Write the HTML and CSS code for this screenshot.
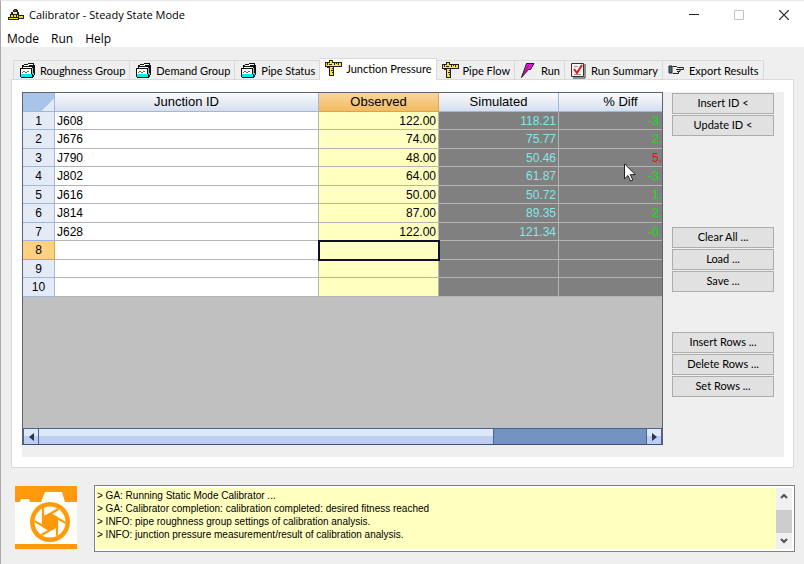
FILE: index.html
```
<!DOCTYPE html>
<html lang="en">
<head>
    <meta charset="UTF-8">
    <meta name="viewport" content="width=device-width, initial-scale=1.0">
    <title>Calibrator - Steady State Mode</title>
    <link rel="stylesheet" href="styles.css">
</head>
<body>
    <!-- shared icons -->
    <svg class="sprite" aria-hidden="true">
        <symbol id="folder" viewBox="0 0 17 17">
            <path d="M1 15V6h2V3h2V2h4V1h6v2h1v10h-1v2h-1v1H2v-1z" fill="#111"/>
            <path d="M5 3h4V2h5v1h-4v1H5zM4 5h9v1H4zM2 7h10v5H2z" fill="#fff"/>
            <path d="M13 6h1v6h-1z" fill="#bbb"/>
            <path d="M4 9h2v1H4zM8 9h2v1H8zM3 10h1v1H3zM6 10h2v1H6z" fill="#666"/>
            <path d="M2 12h11v3H2zM14 11h1v2h-1z" fill="#0ee"/>
        </symbol>
        <symbol id="caliper" viewBox="0 0 17 17">
            <path d="M0 2h4V0h4v2h9v5H9v9H4V8H2V7H0z" fill="#222"/>
            <path d="M1 3h15v3H1zM5 7h3v8H5zM5 1h2v2H5z" fill="#f4ec20"/>
            <path d="M2 3h1v2H2zM4 4h3v1H4zM9 3h1v2H9zM11 3h1v1h-1zM13 3h1v2h-1zM7 8h1v1H7zM6 10h2v1H6zM7 12h1v1H7z" fill="#222"/>
        </symbol>
    </svg>

    <header class="title-bar">
        <svg class="app-icon" viewBox="0 0 16 12" shape-rendering="crispEdges">
            <path d="M0 8h2V5h1V3h2V1h1V0h3v1h1v2h1v3h5v4h-5v1H0z" fill="#222"/>
            <path d="M1 9h9v1H1zM3 6h2v2H3zM6 6h2v2H6zM9 6h1v2H9zM11 7h4v2h-4z" fill="#f0dc20"/>
            <path d="M6 1h2v1H6z" fill="#d22"/>
            <path d="M5 3h4v2H5z" fill="#e8e8e8"/>
        </svg>
        <h1>Calibrator - Steady State Mode</h1>
        <div class="window-controls">
            <button aria-label="Minimize"><svg viewBox="0 0 10 10"><path d="M0 4.500h10" stroke="#222"/></svg></button>
            <button aria-label="Maximize" disabled><svg viewBox="0 0 10 10"><path d="M.5.5h9v9h-9z" fill="none" stroke="#c4c4c4"/></svg></button>
            <button aria-label="Close"><svg viewBox="0 0 10 10"><path d="M0 0l10 10M10 0L0 10" stroke="#222" stroke-width="1.200"/></svg></button>
        </div>
    </header>

    <nav class="menu-bar">
        <button>Mode</button>
        <button>Run</button>
        <button>Help</button>
    </nav>

    <main>
        <div class="tabs" role="tablist">
            <button class="tab" role="tab"><svg shape-rendering="crispEdges"><use href="#folder"/></svg>Roughness Group</button>
            <button class="tab" role="tab"><svg shape-rendering="crispEdges"><use href="#folder"/></svg>Demand Group</button>
            <button class="tab" role="tab"><svg shape-rendering="crispEdges"><use href="#folder"/></svg>Pipe Status</button>
            <button class="tab active" role="tab" aria-selected="true"><svg shape-rendering="crispEdges"><use href="#caliper"/></svg>Junction Pressure</button>
            <button class="tab" role="tab"><svg shape-rendering="crispEdges"><use href="#caliper"/></svg>Pipe Flow</button>
            <button class="tab" role="tab">
                <svg viewBox="0 0 17 17"><path d="M6.500 1.500H14L10.500 7.500H8.500L1.500 15.500 4 8.500z" fill="#e418d8" stroke="#222"/><path d="M9 3l-5 8" stroke="#8a1a80"/></svg>Run
            </button>
            <button class="tab" role="tab">
                <svg viewBox="0 0 17 17"><path d="M1.500 1.500h12v13h-12z" fill="#f4f4f4" stroke="#333"/><path d="M15 2v14H3" fill="none" stroke="#333"/><path d="M4 12.500h7M4 4.500h4" stroke="#999"/><path d="M4 7l3 4 5-8" fill="none" stroke="#e01818" stroke-width="2"/></svg>Run Summary
            </button>
            <button class="tab" role="tab">
                <svg viewBox="0 0 17 17"><path d="M1 4h3v7H1z" fill="#478" stroke="#222"/><path d="M4.500 4.500h4l1 1h6v2h-5M11 7.500h1v2H9M10.500 9.500v2H5L4 10.500" fill="#e8e8e8" stroke="#222"/><path d="M8 7.500h3" stroke="#222"/></svg>Export Results
            </button>
        </div>

        <section class="panel" role="tabpanel">
            <div class="page">
                <div class="grid">
                    <div class="sheet">
                        <table>
                            <colgroup>
                                <col class="col-num">
                                <col class="col-id">
                                <col class="col-value">
                                <col class="col-value">
                                <col class="col-diff">
                            </colgroup>
                            <thead>
                                <tr>
                                    <th class="corner"></th>
                                    <th>Junction ID</th>
                                    <th class="current">Observed</th>
                                    <th>Simulated</th>
                                    <th class="diff-head">% Diff</th>
                                </tr>
                            </thead>
                            <tbody>
                                <tr><th>1</th><td>J608</td><td class="obs">122.00</td><td class="sim">118.21</td><td class="diff">-3.</td></tr>
                                <tr><th>2</th><td>J676</td><td class="obs">74.00</td><td class="sim">75.77</td><td class="diff">2.</td></tr>
                                <tr><th>3</th><td>J790</td><td class="obs">48.00</td><td class="sim">50.46</td><td class="diff high">5.</td></tr>
                                <tr><th>4</th><td>J802</td><td class="obs">64.00</td><td class="sim">61.87</td><td class="diff">-3.</td></tr>
                                <tr><th>5</th><td>J616</td><td class="obs">50.00</td><td class="sim">50.72</td><td class="diff">1.</td></tr>
                                <tr><th>6</th><td>J814</td><td class="obs">87.00</td><td class="sim">89.35</td><td class="diff">2.</td></tr>
                                <tr><th>7</th><td>J628</td><td class="obs">122.00</td><td class="sim">121.34</td><td class="diff">-0.</td></tr>
                                <tr><th class="current">8</th><td></td><td class="obs selected"></td><td class="sim"></td><td class="diff"></td></tr>
                                <tr><th>9</th><td></td><td class="obs"></td><td class="sim"></td><td class="diff"></td></tr>
                                <tr><th>10</th><td></td><td class="obs"></td><td class="sim"></td><td class="diff"></td></tr>
                            </tbody>
                        </table>
                    </div>
                    <div class="h-scroll">
                        <button aria-label="Scroll left"><svg viewBox="0 0 5 8"><path d="M5 0v8L0 4z"/></svg></button>
                        <div class="h-track"><div class="h-thumb"></div></div>
                        <button aria-label="Scroll right"><svg viewBox="0 0 5 8"><path d="M0 0v8l5-4z"/></svg></button>
                    </div>
                    <svg class="pointer" viewBox="0 0 12 19"><path d="M.5.8v15l3.500-3.300 2.500 5.500 2.300-1-2.500-5.400h5z" fill="#fff" stroke="#222"/></svg>
                </div>

                <div class="actions">
                    <div class="action-group">
                        <button>Insert ID &lt;</button>
                        <button>Update ID &lt;</button>
                    </div>
                    <div class="action-group file-group">
                        <button>Clear All ...</button>
                        <button>Load ...</button>
                        <button>Save ...</button>
                    </div>
                    <div class="action-group row-group">
                        <button>Insert Rows ...</button>
                        <button>Delete Rows ...</button>
                        <button>Set Rows ...</button>
                    </div>
                </div>
            </div>
        </section>
    </main>

    <footer>
        <svg class="logo" viewBox="0 0 62 63">
            <path d="M0 0h62v63H0z" fill="#fffef8"/>
            <path d="M0 0h62v16H50L47 6H30l-4 10H15l-1-3H6l-1 3H0zM0 58h62v5H0z" fill="#ff9a0a"/>
            <circle cx="35" cy="36" r="20" fill="#ff9a0a"/>
            <circle cx="35" cy="36" r="15.500" fill="#fffef8"/>
            <!-- shutter blades -->
            <g stroke="#ff9a0a" stroke-width="2.200" fill="#ff9a0a">
                <path d="M35 28l7 4v8l-7 4-7-4v-8z"/>
                <path id="blade" d="M28 32L43.500 23"/>
                <use href="#blade" transform="rotate(60 35 36)"/>
                <use href="#blade" transform="rotate(120 35 36)"/>
                <use href="#blade" transform="rotate(180 35 36)"/>
                <use href="#blade" transform="rotate(240 35 36)"/>
                <use href="#blade" transform="rotate(300 35 36)"/>
            </g>
        </svg>
        <div class="log">
            <textarea readonly aria-label="Messages">&gt; GA: Running Static Mode Calibrator ...
&gt; GA: Calibrator completion: calibration completed: desired fitness reached
&gt; INFO: pipe roughness group settings of calibration analysis.
&gt; INFO: junction pressure measurement/result of calibration analysis.</textarea>
            <div class="v-scroll">
                <button aria-label="Scroll up"><svg viewBox="0 0 8 6"><path d="M1 5l3-3 3 3"/></svg></button>
                <div class="v-thumb"></div>
                <button aria-label="Scroll down"><svg viewBox="0 0 8 6"><path d="M1 1l3 3 3-3"/></svg></button>
            </div>
        </div>
    </footer>
</body>
</html>
```
FILE: styles.css
```
* {
    box-sizing: border-box;
}

body {
    margin: 0;
    min-height: 100vh;
    display: flex;
    flex-direction: column;
    background: #efefef;
    border-left: 1px solid #a8a8a8;
    border-top: 1px solid #e8e8e8;
    color: #000;
    font-family: Lato, "Liberation Sans", sans-serif;
    font-size: 11px;
}

button {
    font: inherit;
    color: inherit;
    border: none;
    padding: 0;
    background: none;
}

svg {
    display: block;
}

.sprite {
    display: none;
}

/* title and menu */
.title-bar {
    display: flex;
    align-items: center;
    height: 27px;
    padding-left: 7px;
    background: #fff;
}

.app-icon {
    width: 16px;
    height: 12px;
}

h1 {
    flex: 1;
    margin: 0 0 0 5px;
    font: 11px "Open Sans", "Noto Sans", sans-serif;
}

.window-controls {
    display: flex;
    gap: 5px;
}

.window-controls button {
    width: 40px;
    height: 26px;
    display: flex;
    align-items: center;
    justify-content: center;
}

.window-controls svg {
    width: 10px;
    height: 10px;
}

.menu-bar {
    display: flex;
    gap: 12px;
    height: 19px;
    padding: 1px 0 0 6px;
    background: #fff;
    font: 12px "Open Sans", "Noto Sans", sans-serif;
}

/* tabs */
main {
    flex: 1;
    display: flex;
    flex-direction: column;
    padding: 11px 10px 0;
}

.tabs {
    display: flex;
    align-items: flex-end;
    padding-left: 2px;
}

.tab {
    display: flex;
    align-items: center;
    gap: 4px;
    height: 19px;
    padding: 0 4px 0 5px;
    border: 1px solid #dadada;
    border-left-width: 0;
    border-bottom: none;
    white-space: nowrap;
}

.tab:first-child {
    border-left-width: 1px;
}

.tab.active {
    height: 22px;
    margin-bottom: -1px;
    padding-bottom: 2px;
    background: #fff;
    position: relative;
}

.tab svg {
    width: 17px;
    height: 17px;
}

.panel {
    flex: 1;
    display: flex;
    padding: 12px 9px 10px 10px;
    background: #fff;
    border: 1px solid #dadada;
}

.page {
    flex: 1;
    min-width: 0;
    display: flex;
    gap: 9px;
    padding: 0 10px 12px 0;
    background: #efefef;
}

/* spreadsheet */
.grid {
    flex: 1;
    min-width: 0;
    display: flex;
    flex-direction: column;
    position: relative;
    border: 1px solid #5f646c;
    border-bottom-color: #3c5078;
    background: #c0c0c0;
}

.sheet {
    flex: 1;
    overflow: hidden;
}

table {
    width: 100%;
    table-layout: fixed;
    border-collapse: separate;
    border-spacing: 0;
    font: 12px/16px "Liberation Sans", Arial, sans-serif;
}

.col-num {
    width: 32px;
}

.col-value {
    width: 120px;
}

.col-diff {
    width: 103px;
}

tr {
    height: 18px;
}

thead tr,
tbody tr:nth-child(even) {
    height: 19px;
}

th,
td {
    padding: 0 2px;
    border-right: 1px solid #b4b4b4;
    border-bottom: 1px solid #b4b4b4;
}

td {
    background: #fff;
}

th {
    font-weight: normal;
    background: #e4ebf7;
    border-color: #9db8dc;
}

thead th {
    background: linear-gradient(#f9fbfe, #d6dfef);
    font-size: 13px;
}

thead .corner {
    background: linear-gradient(135deg, #a9c4e9 74%, #e2ebf7 75%);
}

thead .diff-head {
    padding-left: 20px;
}

th:last-child,
td:last-child {
    padding-right: 0;
    border-right: none;
}

th.current {
    background: #ffd082;
    border-color: #e8a048;
}

thead th.current {
    background: linear-gradient(#fad69a, #f0bb62);
}

.obs {
    background: #ffffc0;
    text-align: right;
}

.sim,
.diff {
    background: #808080;
    color: #7fe8e8;
    text-align: right;
}

.diff {
    color: #10e010;
}

.diff.high {
    color: #e81010;
}

.selected {
    outline: 2px solid #10102c;
    outline-offset: -1px;
}

.h-scroll {
    display: flex;
    height: 16px;
    background: #7394c0;
    border-top: 1px solid #4a628c;
}

.h-scroll button {
    width: 16px;
    display: flex;
    align-items: center;
    justify-content: center;
    background: linear-gradient(#dde8fb 50%, #bccff3 50%);
    border: 1px solid #4a628c;
    border-width: 0 1px;
}

.h-scroll svg {
    width: 5px;
    height: 8px;
    fill: #26344e;
}

.h-track {
    flex: 1;
}

.h-thumb {
    width: 75%;
    height: 100%;
    background: linear-gradient(#dde8fb 50%, #bccff3 50%);
    border-right: 1px solid #4a628c;
}

.pointer {
    position: absolute;
    left: 601px;
    top: 70px;
    width: 12px;
    height: 19px;
}

/* side buttons */
.actions {
    width: 102px;
    padding-top: 1px;
}

.action-group {
    display: flex;
    flex-direction: column;
    gap: 1px;
}

.action-group button {
    height: 21px;
    padding-bottom: 2px;
    background: #e1e1e1;
    border: 1px solid #adadad;
}

.file-group {
    margin-top: 91px;
}

.row-group {
    margin-top: 40px;
}

/* logo and messages */
footer {
    display: flex;
    gap: 17px;
    padding: 17px 9px 12px 14px;
}

.logo {
    width: 62px;
    height: 63px;
    margin-top: 1px;
}

.log {
    flex: 1;
    display: flex;
    height: 67px;
    padding: 2px 2px 2px 1px;
    border: 1px solid #828282;
    background: #fff;
}

.log textarea {
    flex: 1;
    padding: 1px 1px 0;
    border: none;
    outline: none;
    resize: none;
    overflow: hidden;
    background: #ffffc0;
    color: #000;
    font: 10px/13px "Liberation Sans", Arial, sans-serif;
}

.v-scroll {
    width: 16px;
    display: flex;
    flex-direction: column;
    justify-content: space-between;
    background: #f0f0f0;
}

.v-scroll button {
    height: 16px;
    display: flex;
    align-items: center;
    justify-content: center;
}

.v-scroll svg {
    width: 8px;
    height: 6px;
    fill: none;
    stroke: #505050;
    stroke-width: 2;
}

.v-thumb {
    height: 23px;
    margin-top: 6px;
    background: #cdcdcd;
}
```
